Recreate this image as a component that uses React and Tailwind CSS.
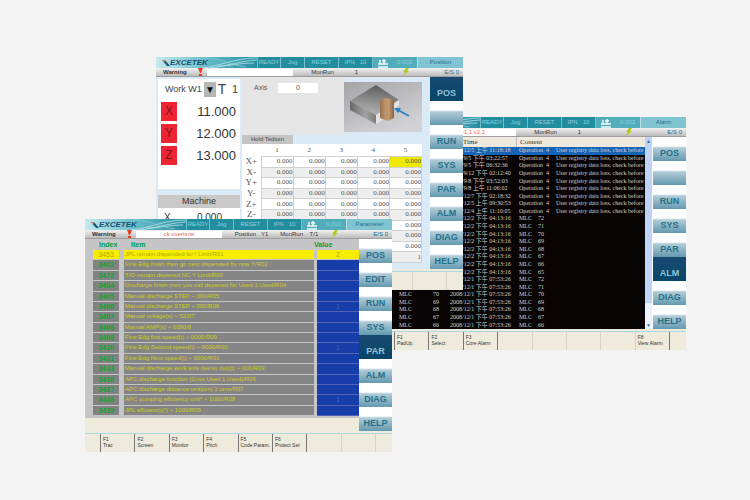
import clsx from 'clsx';

const positionMenu = ['POS', '', 'RUN', 'SYS', 'PAR', 'ALM', 'DIAG', 'HELP'];
const paramMenu = ['POS', 'EDIT', 'RUN', 'SYS', 'PAR', 'ALM', 'DIAG', 'HELP'];

const axes = [
  { name: 'X', value: '11.000' },
  { name: 'Y', value: '12.000' },
  { name: 'Z', value: '13.000' },
];

const offsetRows = ['X+', 'X-', 'Y+', 'Y-', 'Z+', 'Z-', 'C+', 'C-', 'U+', 'T'];

const params = [
  ['3453', 'JPL remain dispended for ! Limit/R01', '2'],
  ['3402', 'Fine Edg finish then go next dispended by now Y/R02', ''],
  ['3472', 'T/O remain depened NC Y Limit/R03', ''],
  ['3404', 'Discharge finish then you call depened Nc Used 1 Used/R04', ''],
  ['3405', 'Manual discharge STEP ~ 000/R05', ''],
  ['3406', 'Manual discharge STEP ~ 000/R06', '1'],
  ['3407', 'Manual voltage(s) ~ 52/07', ''],
  ['3408', 'Manual AMP(s) ~ 0080/8', ''],
  ['3409', 'Fine Edg first speed(t) ~ 0000/R09', ''],
  ['3430', 'Fine Edg Second speed(t) ~ 0000/R00', '1'],
  ['3431', 'Fine Edg Next speed(t) ~ 0000/R01', ''],
  ['3433', 'Manual discharge work axis (servo out)(t) ~ 000/R03', ''],
  ['3436', 'APC discharge function (0:not Used 1:Used)/R06', ''],
  ['3437', 'APC discharge distance unit(um) 1:ums/R07', ''],
  ['3438', 'APC pumping efficiency unit* ~ 1000/R08', '1'],
  ['3439', 'JPL efficiency(*) ~ 1000/R09', ''],
];

const alarmTimes = [
  '12/5 上午 11:18:18',
  '9/5 下午 03:22:57',
  '9/5 下午 06:32:36',
  '9/12 下午 02:12:40',
  '9/8 下午 03:52:03',
  '9/8 上午 11:06:02',
  '12/7 下午 02:18:32',
  '12/5 上午 09:30:53',
  '12/4 上午 11:10:05',
];

const alarms = [
  ...alarmTimes.map((time) => ({ time, content: 'Operation  4', message: 'User registry data loss, check before' })),
  ...[72, 71, 70, 69, 68, 67, 66, 65].map((n) => ({ time: '12/2 下午 04:13:16', content: `MLC    ${n}`, no: n })),
  ...[72, 71, 70, 69, 68, 67, 66].map((n) => ({ time: '12/1 下午 07:53:26', content: `MLC    ${n}`, no: n })),
];

function Machine({ title, status, menu, active, keys, className, children }) {
  return (
    <section className={clsx('absolute flex h-[233px] w-[307px] flex-col bg-[#efebdc]', className)}>
      <TitleBar title={title} />
      <StatusBar {...status} />
      <div className="flex h-[192px] shrink-0">
        <div className="min-w-0 flex-1">{children}</div>
        <SideMenu items={menu} active={active} />
      </div>
      <SoftKeys keys={keys} />
    </section>
  );
}

function TitleBar({ title }) {
  return (
    <header className="flex h-[11px] shrink-0 items-stretch bg-[#238da0] text-[6px] leading-[11px] text-[#8ed0da]">
      <div className="relative w-[101px] overflow-hidden bg-linear-to-r from-[#c5e9ee] via-[#65bdca] to-[#238da0]">
        <svg className="absolute inset-0 h-full w-full" viewBox="0 0 101 11" preserveAspectRatio="none" fill="none">
          <path d="M46 11C62 10 78 1 101 1M54 11C68 10 83 4 101 3M62 9C74 9 84 6 98 6" stroke="#b9e3ea" strokeWidth="0.8" />
          <path d="M48 1C62 0 70 7 90 10" stroke="#83cbd5" strokeWidth="0.7" />
        </svg>
        <div className="relative flex items-center pl-1.5">
          <svg className="h-2 w-2" viewBox="0 0 8 8">
            <path d="M0 1h3l5 6H5z" fill="#17597f" />
            <path d="M0 1h3L2 4z" fill="#e68a43" />
          </svg>
          <span className="text-[8px] font-bold italic leading-[11px] text-[#14506f]">EXCETEK</span>
        </div>
      </div>
      <span className="w-6 border-x border-[#75bec9] text-center">READY</span>
      <span className="w-6 border-r border-[#75bec9] text-center">Jog</span>
      <span className="w-[34px] border-r border-[#75bec9] text-center">RESET</span>
      <span className="w-[34px] border-r border-[#75bec9] text-center whitespace-pre">IPN   10</span>
      <span className="flex w-11 items-center gap-2 bg-[#52adbb] pl-1">
        <svg className="h-2.5 w-3" viewBox="0 0 12 10" stroke="#f4fcfd" strokeWidth="1.4" fill="none">
          <path d="M1 9h10M1 6h10M3 2v4M7 1v5M5 3h4" />
        </svg>
        0.002
      </span>
      <span className="flex-1 border-l border-[#b9dfe5] bg-[#80c3d1] text-center text-[#256f91]">{title}</span>
    </header>
  );
}

function StatusBar({ alert, position, unit = '1' }) {
  return (
    <div className="flex h-[9px] shrink-0 items-center border-b border-[#9d9d9d] bg-linear-to-b from-[#f1f1f1] to-[#bdbdbd] text-[6px] leading-[8px] text-[#333]">
      <span className="w-[41px] pl-[7px] font-bold">Warning</span>
      <svg className="h-2 w-[10px]" viewBox="0 0 10 8" fill="#ee3b20">
        <path d="M1 0h5L4 5H3zM2 6h3v2H2z" />
      </svg>
      <span className="h-[7px] w-[86px] bg-white text-center leading-[7px] text-[#ef6a45]">{alert}</span>
      <span className="w-[55px] pl-1 text-center whitespace-pre">{position ? 'Position   Y1' : 'MonRun'}</span>
      <span className="w-[54px] whitespace-pre">{position ? '  MonRun    T/1' : `    ${unit}`}</span>
      <svg className="h-2 w-2" viewBox="0 0 8 8" fill="#b5c51b">
        <path d="M4 0h3L5 3h2L1 8l2-4H1z" />
      </svg>
      <span className="flex-1 pr-1 text-right text-[#226f94]">E/S 0</span>
    </div>
  );
}

function SideMenu({ items, active }) {
  return (
    <nav className="flex w-[33px] shrink-0 flex-col">
      {items.map((item, i) => (
        <button
          key={i}
          type="button"
          aria-label={item || 'Empty'}
          className={clsx(
            'h-6 w-full pt-2 text-center text-[9px] font-bold leading-4',
            item === active
              ? 'bg-linear-to-b from-[#174971] to-[#06466a] text-[#91c3d5]'
              : 'bg-linear-to-b from-white from-38% via-[#b2ccd7] via-45% to-[#6399af] text-[#24718c]',
          )}
        >
          {item}
        </button>
      ))}
    </nav>
  );
}

function SoftKeys({ keys }) {
  return (
    <footer className="mt-0.5 flex min-h-0 flex-1 border-t border-[#acd7e3] text-[5px] leading-[6px] text-[#333]">
      <span className="w-4 border-r border-[#777]" />
      {keys.map((key, i) => (
        <button
          key={i}
          type="button"
          aria-label={key || 'Empty'}
          className={clsx(
            'flex min-w-0 flex-1 flex-col items-start border-r pt-0.5 pl-0.5 text-left whitespace-nowrap',
            key ? 'border-[#777]' : 'border-[#d6d2c4]',
          )}
        >
          {key && (
            <>
              <span>F{i + 1}</span>
              <span>{key}</span>
            </>
          )}
        </button>
      ))}
      <span className="w-4" />
    </footer>
  );
}

function Workpiece() {
  return (
    <svg className="h-[50px] w-[78px]" viewBox="0 0 78 50">
      <defs>
        <linearGradient id="backdrop" x1="0" y1="0" x2="0.6" y2="1">
          <stop stopColor="#a4a4a8" />
          <stop offset="1" stopColor="#d2d2d6" />
        </linearGradient>
        <linearGradient id="steel" x1="0.6" y1="0" x2="0.4" y2="1">
          <stop stopColor="#5c5c5c" />
          <stop offset="0.6" stopColor="#939393" />
          <stop offset="1" stopColor="#b4b4b4" />
        </linearGradient>
        <linearGradient id="side" x1="0" x2="1">
          <stop stopColor="#686868" />
          <stop offset="0.6" stopColor="#a2a2a2" />
          <stop offset="1" stopColor="#7c7c7c" />
        </linearGradient>
        <linearGradient id="copper" x1="0" x2="1">
          <stop stopColor="#95704e" />
          <stop offset="0.55" stopColor="#cca477" />
          <stop offset="1" stopColor="#866548" />
        </linearGradient>
      </defs>
      <path d="M0 0h78v50H0z" fill="url(#backdrop)" />
      <path d="M6 19 32 3l23 15-23 15z" fill="url(#steel)" />
      <path d="M6 19v9l26 14v-9z" fill="url(#side)" />
      <path d="M32 33v9l5-3 18-16v-5z" fill="#e2e2e2" />
      <path d="m36 18 5-2 9 2v18l-6 3-8-3z" fill="url(#copper)" />
      <path d="M43 18v20" stroke="#a88058" strokeWidth="0.8" />
      <path d="M65 34 54 28" stroke="#2783c5" strokeWidth="1.6" />
      <path d="m50 26 7 0-3 5z" fill="#2783c5" />
    </svg>
  );
}

function PositionPanel() {
  return (
    <div className="flex h-full gap-0.5 bg-[#dbeaf7] pl-0.5">
      <div className="flex w-[82px] flex-col">
        <div className="mt-0.5 h-[110px] bg-white pl-[3px]">
          <div className="flex h-[21px] items-center text-[9px] text-[#444]">
            <span className="w-[43px] pl-1">Work W1</span>
            <button type="button" aria-label="Work offset" className="h-[15px] w-3 bg-[#b6b6b6] text-[10px] leading-[15px] text-[#111]">▼</button>
            <span className="w-3 text-center text-[14px]">T</span>
            <span className="pl-1 text-[11px]">1</span>
          </div>
          <div className="flex flex-col gap-[3px] pt-0.5">
            {axes.map((axis) => (
              <div key={axis.name} className="flex h-[19px] items-center justify-between pr-1">
                <span className="h-full w-4 bg-[#ee2432] text-center text-[12px] leading-[19px] text-[#7c1520]">{axis.name}</span>
                <span className="text-[13px] text-[#333]">{axis.value}</span>
              </div>
            ))}
          </div>
        </div>
        <div className="mt-1.5 h-[13px] bg-[#c8c8c8] text-center text-[9px] leading-[13px] text-[#333]">Machine</div>
        <div className="flex flex-1 items-start justify-between bg-white px-1.5 pt-0.5 text-[10px] text-[#333]">
          <span>X</span>
          <span className="pr-3">0.000</span>
        </div>
      </div>

      <div className="flex min-w-0 flex-1 flex-col pr-2">
        <div className="flex h-[58px]">
          <label className="flex w-[105px] items-start gap-2 bg-[#e5e5e5] pt-1.5 pl-3 text-[7px] leading-[10px] text-[#555]">
            <span className="w-4">Axis</span>
            <input defaultValue="0" className="h-2.5 w-10 bg-white text-center text-[7px]" />
          </label>
          <div className="pt-[5px]">
            <Workpiece />
          </div>
        </div>
        <div className="h-[9px] w-[51px] bg-[#c4c4c4] text-center text-[6px] leading-[9px] text-[#444]">Hold Tedium</div>
        <table className="h-[119px] w-full table-fixed border-collapse bg-white font-['Liberation_Serif',serif] text-[7px] text-[#555]">
          <thead>
            <tr className="h-3 leading-3">
              <th className="w-[19px] p-0" />
              {[1, 2, 3, 4, 5].map((n) => (
                <th key={n} className="p-0 font-normal">{n}</th>
              ))}
            </tr>
          </thead>
          <tbody>
            {offsetRows.map((row, i) => (
              <tr key={row} className="leading-[9px] even:bg-[#eee]">
                <th className="bg-white p-0 text-[9px] font-normal">{row}</th>
                {[1, 2, 3, 4, 5].map((n) => (
                  <td key={n} className={clsx('border border-[#d0d0d0] p-0 text-right', i === 0 && n === 5 && 'bg-[#eee800]')}>
                    {row === 'T' ? '1' : '0.000'}
                  </td>
                ))}
              </tr>
            ))}
          </tbody>
        </table>
      </div>
    </div>
  );
}

function AlarmPanel() {
  return (
    <div className="flex h-full">
      <table className="block h-full min-w-0 flex-1 overflow-hidden bg-[#080404] font-['Liberation_Serif','Noto_Sans_CJK_TC',serif] text-[6px] text-[#d0d0d0]">
        <thead className="block h-2.5 bg-[#eeeadd] text-[7px] text-[#333]">
          <tr className="flex text-left leading-[10px]">
            <th className="w-[72px] pl-5 font-normal">Type</th>
            <th className="w-[65px] pl-3 font-normal">Time</th>
            <th className="flex-1 border-l border-[#bbb] pl-[3px] font-normal">Content</th>
          </tr>
        </thead>
        <tbody className="flex h-[182px] flex-col">
          {alarms.map((alarm, i) => (
            <tr key={i} className={clsx('flex min-h-0 flex-1 items-center leading-[7px] whitespace-nowrap', i === 0 && 'bg-[#1763b5]')}>
              <td className="w-[54px] pl-5">{alarm.no ? 'MLC' : 'OP'}</td>
              <td className="w-[17px]">{alarm.no || 4}</td>
              <td className="w-[69px]">2008/{alarm.time}</td>
              <td className="w-[37px] whitespace-pre">{alarm.content}</td>
              <td className="min-w-0 flex-1">{alarm.message}</td>
            </tr>
          ))}
        </tbody>
      </table>
      <div className="flex w-2 flex-col items-center justify-between border-r border-white bg-[#bed3f6] text-[5px] leading-[8px] text-[#3467a7]">
        <span>▲</span>
        <span className="flex h-[26px] w-full items-end justify-center bg-[#edf3fc]">▼</span>
      </div>
    </div>
  );
}

function ParameterPanel() {
  return (
    <div className="flex h-full flex-col">
      <table className="block bg-[#c5c5c8] pb-0.5 pl-2 text-[7px]">
        <thead className="block h-[11px] text-[#009c43]">
          <tr className="flex text-left leading-[12px]">
            <th className="w-7 pl-1.5">Index</th>
            <th className="flex-1 pl-2.5">Item</th>
            <th className="w-[45px]">Value</th>
          </tr>
        </thead>
        <tbody className="flex h-[166px] flex-col">
          {params.map(([index, item, value], i) => (
            <tr key={index} className={clsx('flex min-h-0 flex-1 items-stretch leading-[9px] whitespace-nowrap', i === 0 ? 'text-[#b0a900]' : 'text-[#cccd1a]')}>
              <td className={clsx('mr-1 w-[26px] border-b border-[#c5c5c8] text-center', i === 0 ? 'bg-[#f7ed00]' : 'bg-[#828282] font-bold text-[#00a843]')}>{index}</td>
              <td className={clsx('mr-[3px] flex-1 border-b border-l border-[#c5c5c8] pl-px text-[6px]', i === 0 ? 'bg-[#f7ed00]' : 'bg-[#858585]')}>{item}</td>
              <td className={clsx('w-[42px] border-b text-center', i === 0 ? 'border-[#c5c5c8] bg-[#f7ed00]' : 'border-[#5364b6] bg-[#163da8] text-[#4c64bd]')}>{value}</td>
            </tr>
          ))}
        </tbody>
      </table>
      <div className="flex-1 bg-[#efebdc]" />
    </div>
  );
}

function App() {
  return (
    <main className="relative min-h-screen overflow-hidden bg-[#f3f3f3] font-['Liberation_Sans',Arial,sans-serif]">
      <Machine
        className="top-[117px] left-[379px]"
        title="Alarm"
        status={{ alert: 'w1,1 v2,2,' }}
        menu={positionMenu}
        active="ALM"
        keys={['PadUp', 'Select', 'Core Alarm', '', '', '', '', 'View Alarm']}
      >
        <AlarmPanel />
      </Machine>
      <Machine
        className="top-[57px] left-[156px]"
        title="Position"
        status={{}}
        menu={positionMenu}
        active="POS"
        keys={['', '', '', '', '', '', '', '']}
      >
        <PositionPanel />
      </Machine>
      <Machine
        className="top-[219px] left-[85px]"
        title="Parameter"
        status={{ alert: 'ck overtime', position: true }}
        menu={paramMenu}
        active="PAR"
        keys={['Trac', 'Screen', 'Monitor', 'Pitch', 'Code Param.', 'Protect Set', '', '']}
      >
        <ParameterPanel />
      </Machine>
    </main>
  );
}

export default App;
